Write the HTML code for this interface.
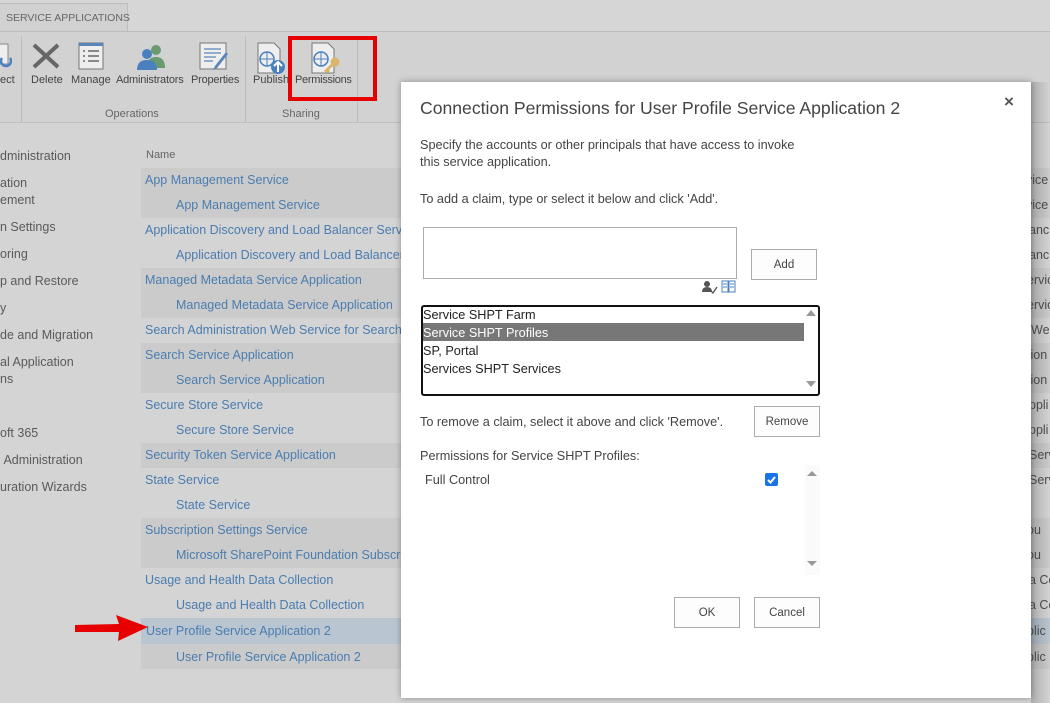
<!DOCTYPE html>
<html><head><meta charset="utf-8"><style>
*{margin:0;padding:0;box-sizing:border-box}
body{width:1050px;height:703px;overflow:hidden;background:#d4d4d4;font-family:"Liberation Sans",sans-serif;position:relative;color:#555}
.a{position:absolute;white-space:nowrap}
.lk{color:#4a7db0;font-size:12.5px}
.nav{color:#5a5a5a;font-size:12.5px}
.row{position:absolute;left:141px;width:910px;height:25px}
.dk{background:#cbcbcb}
.rb{font-size:11px;color:#444}
.btn{position:absolute;border:1px solid #ababab;background:#fdfdfd;font-size:11.5px;color:#444;text-align:center}
.dl{color:#444;font-size:12.7px}
</style></head><body>
<div class="a" style="left:0;top:0;width:1050px;height:31px;background:#d6d6d6"></div>
<div class="a" style="left:0;top:3px;width:128px;height:29px;background:#d1d1d1;border:1px solid #bdbdbd;border-bottom:none;border-left:none"></div>
<div class="a" style="left:6px;top:12px;font-size:10.5px;color:#666">SERVICE APPLICATIONS</div>
<div class="a" style="left:0;top:31px;width:1050px;height:92px;background:#d2d2d2;border-top:1px solid #bdbdbd;border-bottom:1px solid #c0c0c0"></div>
<div class="a" style="left:21px;top:36px;width:1px;height:86px;background:#bcbcbc"></div>
<div class="a" style="left:245px;top:36px;width:1px;height:86px;background:#bcbcbc"></div>
<div class="a" style="left:357px;top:36px;width:1px;height:86px;background:#bcbcbc"></div>
<svg class="a" style="left:0;top:40px" width="12" height="30"><rect x="-6" y="4" width="14" height="20" fill="#eee" stroke="#888"/><path d="M2 18a5 5 0 1 0 8 0" stroke="#4a80c0" stroke-width="2.5" fill="none"/></svg>
<div class="a rb" style="left:0;top:74px">ect</div>
<svg class="a" style="left:31px;top:42px" width="30" height="28"><path d="M3 3L27 25M27 3L3 25" stroke="#666" stroke-width="4"/></svg>
<div class="a rb" style="left:31px;top:74px">Delete</div>
<svg class="a" style="left:78px;top:42px" width="26" height="28"><rect x="1" y="1" width="24" height="26" fill="#eee" stroke="#777"/><rect x="1" y="1" width="24" height="3" fill="#5a85b8"/><path d="M5 9h2M10 9h11M5 14h2M10 14h11M5 19h2M10 19h11" stroke="#666" stroke-width="1.5"/></svg>
<div class="a rb" style="left:71px;top:74px">Manage</div>
<svg class="a" style="left:135px;top:42px" width="32" height="28"><circle cx="21" cy="8" r="5" fill="#6a9a70"/><path d="M12 26q0-11 9-11t9 11z" fill="#6a9a70"/><circle cx="12" cy="12" r="5" fill="#4a80c0"/><path d="M2 28q0-10 10-10t10 10z" fill="#4a80c0"/></svg>
<div class="a rb" style="left:116px;top:74px;letter-spacing:-.2px">Administrators</div>
<svg class="a" style="left:199px;top:42px" width="32" height="30"><rect x="1" y="1" width="26" height="26" fill="#eee" stroke="#777"/><path d="M5 7h17M5 11h17M5 15h12M5 19h9" stroke="#5a85b8" stroke-width="1.3"/><path d="M27 10L16 24l-2 4 4-2L29 12z" fill="#5a85b8"/></svg>
<div class="a rb" style="left:191px;top:74px;letter-spacing:-.2px">Properties</div>
<svg class="a" style="left:257px;top:42px" width="30" height="32"><path d="M1 1h16l6 6v24H1z" fill="#eee" stroke="#777"/><circle cx="10" cy="17" r="7" fill="none" stroke="#4a80c0" stroke-width="1.5"/><path d="M3 17h14M10 10v14" stroke="#4a80c0"/><circle cx="21" cy="25" r="7" fill="#4a80c0"/><path d="M21 30v-9M17 24l4-4 4 4" stroke="#fff" stroke-width="2" fill="none"/></svg>
<div class="a rb" style="left:253px;top:74px">Publish</div>
<svg class="a" style="left:311px;top:42px" width="30" height="32"><path d="M1 1h16l6 6v24H1z" fill="#eee" stroke="#777"/><circle cx="10" cy="17" r="7" fill="none" stroke="#4a80c0" stroke-width="1.5"/><path d="M3 17h14M10 10v14" stroke="#4a80c0"/><circle cx="24" cy="20" r="4.5" fill="#d9b56a"/><path d="M21 23l-7 7M16 28l2 2" stroke="#d9b56a" stroke-width="3"/></svg>
<div class="a rb" style="left:295px;top:74px;letter-spacing:-.3px">Permissions</div>
<div class="a" style="left:288px;top:36px;width:89px;height:65px;border:4px solid #e60000"></div>
<div class="a rb" style="left:105px;top:108px;color:#666">Operations</div>
<div class="a rb" style="left:282px;top:108px;color:#666">Sharing</div>
<div class="a nav" style="left:0;top:149px">dministration</div>
<div class="a nav" style="left:0;top:176px">ation</div>
<div class="a nav" style="left:0;top:193px">ement</div>
<div class="a nav" style="left:0;top:220px">n Settings</div>
<div class="a nav" style="left:0;top:247px">oring</div>
<div class="a nav" style="left:0;top:274px">p and Restore</div>
<div class="a nav" style="left:0;top:301px">y</div>
<div class="a nav" style="left:0;top:328px">de and Migration</div>
<div class="a nav" style="left:0;top:355px">al Application</div>
<div class="a nav" style="left:0;top:372px">ns</div>
<div class="a nav" style="left:0;top:426px">oft 365</div>
<div class="a nav" style="left:0;top:453px">&nbsp;Administration</div>
<div class="a nav" style="left:0;top:480px">uration Wizards</div>
<div class="a" style="left:146px;top:149px;font-size:11px;color:#666">Name</div>
<div class="row dk" style="top:168px;height:50px"></div>
<div class="row dk" style="top:268px;height:50px"></div>
<div class="row dk" style="top:343px;height:50px"></div>
<div class="row dk" style="top:443px"></div>
<div class="row dk" style="top:518px;height:50px"></div>
<div class="row" style="top:618px;height:26px;background:#b9c5d1"></div>
<div class="row dk" style="top:644px"></div>
<div class="a lk" style="left:145px;top:173px">App Management Service</div>
<div class="a lk" style="left:176px;top:198px">App Management Service</div>
<div class="a lk" style="left:145px;top:223px">Application Discovery and Load Balancer Service</div>
<div class="a lk" style="left:176px;top:248px">Application Discovery and Load Balancer</div>
<div class="a lk" style="left:145px;top:273px">Managed Metadata Service Application</div>
<div class="a lk" style="left:176px;top:298px">Managed Metadata Service Application</div>
<div class="a lk" style="left:145px;top:323px">Search Administration Web Service for Search</div>
<div class="a lk" style="left:145px;top:348px">Search Service Application</div>
<div class="a lk" style="left:176px;top:373px">Search Service Application</div>
<div class="a lk" style="left:145px;top:398px">Secure Store Service</div>
<div class="a lk" style="left:176px;top:423px">Secure Store Service</div>
<div class="a lk" style="left:145px;top:448px">Security Token Service Application</div>
<div class="a lk" style="left:145px;top:473px">State Service</div>
<div class="a lk" style="left:176px;top:498px">State Service</div>
<div class="a lk" style="left:145px;top:523px">Subscription Settings Service</div>
<div class="a lk" style="left:176px;top:548px">Microsoft SharePoint Foundation Subscription</div>
<div class="a lk" style="left:145px;top:573px">Usage and Health Data Collection</div>
<div class="a lk" style="left:176px;top:598px">Usage and Health Data Collection</div>
<div class="a lk" style="left:146px;top:624px">User Profile Service Application 2</div>
<div class="a lk" style="left:176px;top:650px">User Profile Service Application 2</div>
<svg class="a" style="left:73px;top:613px" width="76" height="30"><path d="M2 12L46 11L43 2L75 14L45 28L46 19L2 19z" fill="#e60000"/></svg>
<div class="a" style="left:1031px;top:82px;width:19px;height:621px;overflow:hidden">
<div class="a" style="left:0;top:0;width:19px;height:621px;background:linear-gradient(90deg,rgba(0,0,0,.18),rgba(0,0,0,0))"></div>
<div class="a lk" style="left:-5px;top:91px;color:#4a4a4a">vice</div>
<div class="a lk" style="left:-5px;top:116px;color:#4a4a4a">vice</div>
<div class="a lk" style="left:-2px;top:141px;color:#4a4a4a">anc</div>
<div class="a lk" style="left:-2px;top:166px;color:#4a4a4a">anc</div>
<div class="a lk" style="left:-4px;top:191px;color:#4a4a4a">ervic</div>
<div class="a lk" style="left:-4px;top:216px;color:#4a4a4a">ervic</div>
<div class="a lk" style="left:0;top:241px;color:#4a4a4a">We</div>
<div class="a lk" style="left:-4px;top:266px;color:#4a4a4a">tion</div>
<div class="a lk" style="left:-4px;top:291px;color:#4a4a4a">tion</div>
<div class="a lk" style="left:-2px;top:316px;color:#4a4a4a">ppli</div>
<div class="a lk" style="left:-2px;top:341px;color:#4a4a4a">ppli</div>
<div class="a lk" style="left:-2px;top:366px;color:#4a4a4a">Serv</div>
<div class="a lk" style="left:-2px;top:391px;color:#4a4a4a">Serv</div>
<div class="a lk" style="left:-4px;top:441px;color:#4a4a4a">ou</div>
<div class="a lk" style="left:-4px;top:466px;color:#4a4a4a">ou</div>
<div class="a lk" style="left:-2px;top:491px;color:#4a4a4a">a Co</div>
<div class="a lk" style="left:-2px;top:516px;color:#4a4a4a">a Co</div>
<div class="a lk" style="left:-4px;top:542px;color:#4a4a4a">plic</div>
<div class="a lk" style="left:-4px;top:568px;color:#4a4a4a">plic</div>
</div>
<div class="a" style="left:401px;top:82px;width:630px;height:616px;background:#fff;box-shadow:0 0 6px rgba(0,0,0,.35)"></div>
<div class="a" style="left:420px;top:98px;font-size:17.6px;color:#444">Connection Permissions for User Profile Service Application 2</div>
<div class="a" style="left:1004px;top:92px;font-size:17px;color:#555;font-weight:bold">×</div>
<div class="a dl" style="left:420px;top:137px;line-height:17px">Specify the accounts or other principals that have access to invoke<br>this service application.</div>
<div class="a dl" style="left:420px;top:192px">To add a claim, type or select it below and click 'Add'.</div>
<div class="a" style="left:423px;top:227px;width:314px;height:52px;border:1px solid #ababab"></div>
<svg class="a" style="left:701px;top:279px" width="38" height="16"><circle cx="6" cy="5" r="3" fill="#555"/><path d="M1 13q0-5 5-5t5 5z" fill="#555"/><path d="M9 11l3 3 4-6" stroke="#555" fill="none" stroke-width="1.3"/><rect x="21" y="2" width="6" height="11" fill="none" stroke="#4a80c0"/><rect x="28" y="2" width="6" height="11" fill="none" stroke="#4a80c0"/><path d="M22 5h4M22 8h4M29 5h4M29 8h4" stroke="#4a80c0"/></svg>
<div class="btn" style="left:751px;top:249px;width:66px;height:31px;line-height:31px">Add</div>
<div class="a" style="left:421px;top:305px;width:399px;height:91px;border:2px solid #111;border-radius:3px"></div>
<div class="a" style="left:423px;top:323px;width:381px;height:18px;background:#777"></div>
<div class="a dl" style="left:423px;top:306px;color:#222;line-height:18px">Service SHPT Farm<br><span style="color:#fff">Service SHPT Profiles</span><br>SP, Portal<br>Services SHPT Services</div>
<div class="a" style="left:806px;top:310px;border:5px solid transparent;border-bottom:6px solid #999;border-top:none"></div>
<div class="a" style="left:806px;top:381px;border:5px solid transparent;border-top:6px solid #999;border-bottom:none"></div>
<div class="a dl" style="left:420px;top:415px">To remove a claim, select it above and click 'Remove'.</div>
<div class="btn" style="left:754px;top:406px;width:66px;height:31px;line-height:31px">Remove</div>
<div class="a dl" style="left:420px;top:449px">Permissions for Service SHPT Profiles:</div>
<div class="a dl" style="left:425px;top:473px">Full Control</div>
<div class="a" style="left:765px;top:473px;width:13px;height:13px;background:#1a73e8;border-radius:2px"></div>
<svg class="a" style="left:765px;top:473px" width="13" height="13"><path d="M3 7l2.5 2.5L10 4" stroke="#fff" stroke-width="2" fill="none"/></svg>
<div class="a" style="left:805px;top:465px;width:15px;height:110px;background:#fafafa"></div>
<div class="a" style="left:807px;top:471px;border:5px solid transparent;border-bottom:5px solid #999;border-top:none"></div>
<div class="a" style="left:807px;top:561px;border:5px solid transparent;border-top:5px solid #999;border-bottom:none"></div>
<div class="btn" style="left:674px;top:597px;width:66px;height:31px;line-height:31px">OK</div>
<div class="btn" style="left:754px;top:597px;width:66px;height:31px;line-height:31px">Cancel</div>
</body></html>
